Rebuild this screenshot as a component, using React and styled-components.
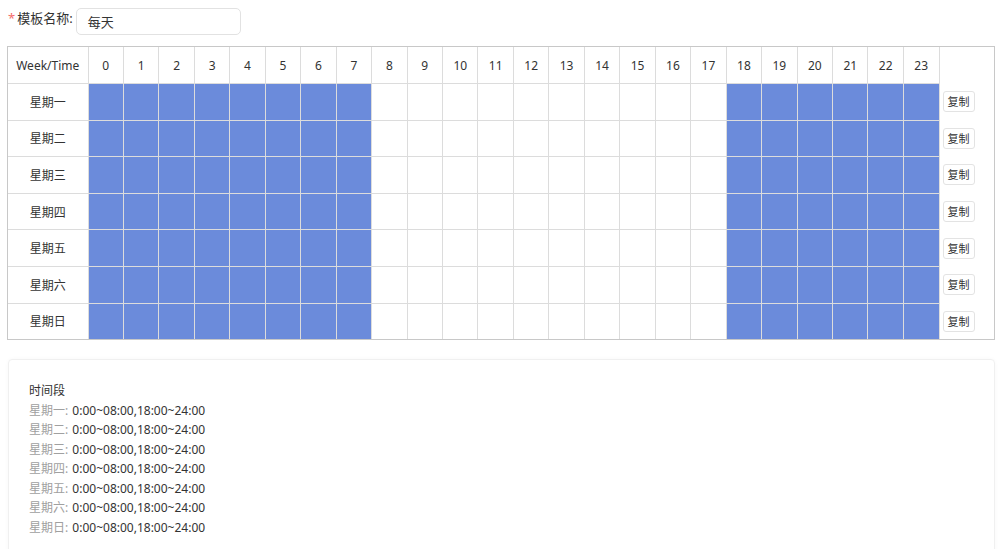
import React from 'react'
import styled, { createGlobalStyle } from 'styled-components'

const GlobalStyle = createGlobalStyle`
    body {
        margin: 0;
        background: #fff;
        font-family: "Noto Sans", "Noto Sans CJK SC", sans-serif;
        color: #333;
    }
`

const Page = styled.div`
    padding: 8px 9px 0 7px;
    width: 988px;
`

const FormRow = styled.div`
    display: flex;
    align-items: center;
    height: 27px;
    padding-left: 1px;
`

const Label = styled.label`
    font-size: 13px;
    color: #333;
    margin-right: 3px;
    margin-top: -9px;

    &::before {
        content: '*';
        color: #f56c6c;
        margin-right: 2px;
    }
`

const Input = styled.div`
    box-sizing: border-box;
    width: 165px;
    height: 27px;
    border: 1px solid #e2e2e2;
    border-radius: 5px;
    padding: 0 11px;
    font-size: 13px;
    line-height: 26px;
    color: #333;
`

const TableBox = styled.div`
    margin-top: 11px;
    border: 1px solid #c8c8c8;
`

const Table = styled.table`
    width: 100%;
    border-collapse: collapse;
    border-style: hidden;
    table-layout: fixed;
    font-size: 12px;
    color: #333;
`

const Th = styled.th`
    height: 36px;
    font-weight: normal;
    border: 1px solid #dcdcdc;
    text-align: center;
    padding: 0;
`

const DayCell = styled.td`
    height: 35.6px;
    border: 1px solid #dcdcdc;
    text-align: center;
    padding: 0;
`

const Slot = styled.td`
    border: 1px solid #dcdcdc;
    background: ${p => (p.$on ? '#6b8bdb' : '#fff')};
    padding: 0;
`

const Side = styled.td`
    border: none;
    border-left: 1px solid #dcdcdc;
    padding: 0 0 0 3px;
`

const CopyButton = styled.button`
    font-family: "Noto Sans", "Noto Sans CJK SC", sans-serif;
    font-size: 11px;
    color: #333;
    background: #fff;
    border: 1px solid #e3e3e3;
    border-radius: 3px;
    padding: 0 4px;
    height: 21px;
    line-height: 19px;
    cursor: pointer;
`

const Panel = styled.div`
    margin-top: 19px;
    margin-left: 1px;
    border: 1px solid #f0f0f0;
    border-radius: 4px;
    box-shadow: 0 0 4px rgba(0, 0, 0, 0.03);
    padding: 21px 20px 30px;
    font-size: 12px;
    line-height: 19.5px;
`

const PanelTitle = styled.div`
    color: #333;
`

const Line = styled.div`
    color: #333;
`

const Dim = styled.span`
    color: #a0a0a0;
    margin-right: 1px;
`

const days = ['星期一', '星期二', '星期三', '星期四', '星期五', '星期六', '星期日']
const hours = Array.from({ length: 24 }, (_, i) => i)
const isOn = h => h < 8 || h >= 18

const App = () => {
    return (
        <>
            <GlobalStyle />
            <Page>
                <FormRow>
                    <Label>模板名称:</Label>
                    <Input>每天</Input>
                </FormRow>

                <TableBox>
                    <Table>
                        <colgroup>
                            <col style={{ width: 80 }} />
                            {hours.map(h => <col key={h} />)}
                            <col style={{ width: 55 }} />
                        </colgroup>
                        <thead>
                            <tr>
                                <Th>Week/Time</Th>
                                {hours.map(h => <Th key={h}>{h}</Th>)}
                                <Side />
                            </tr>
                        </thead>
                        <tbody>
                            {days.map(d => (
                                <tr key={d}>
                                    <DayCell>{d}</DayCell>
                                    {hours.map(h => <Slot key={h} $on={isOn(h)} />)}
                                    <Side><CopyButton>复制</CopyButton></Side>
                                </tr>
                            ))}
                        </tbody>
                    </Table>
                </TableBox>

                <Panel>
                    <PanelTitle>时间段</PanelTitle>
                    {days.map(d => (
                        <Line key={d}><Dim>{d}:</Dim> 0:00~08:00,18:00~24:00</Line>
                    ))}
                </Panel>
            </Page>
        </>
    )
}

export default App
